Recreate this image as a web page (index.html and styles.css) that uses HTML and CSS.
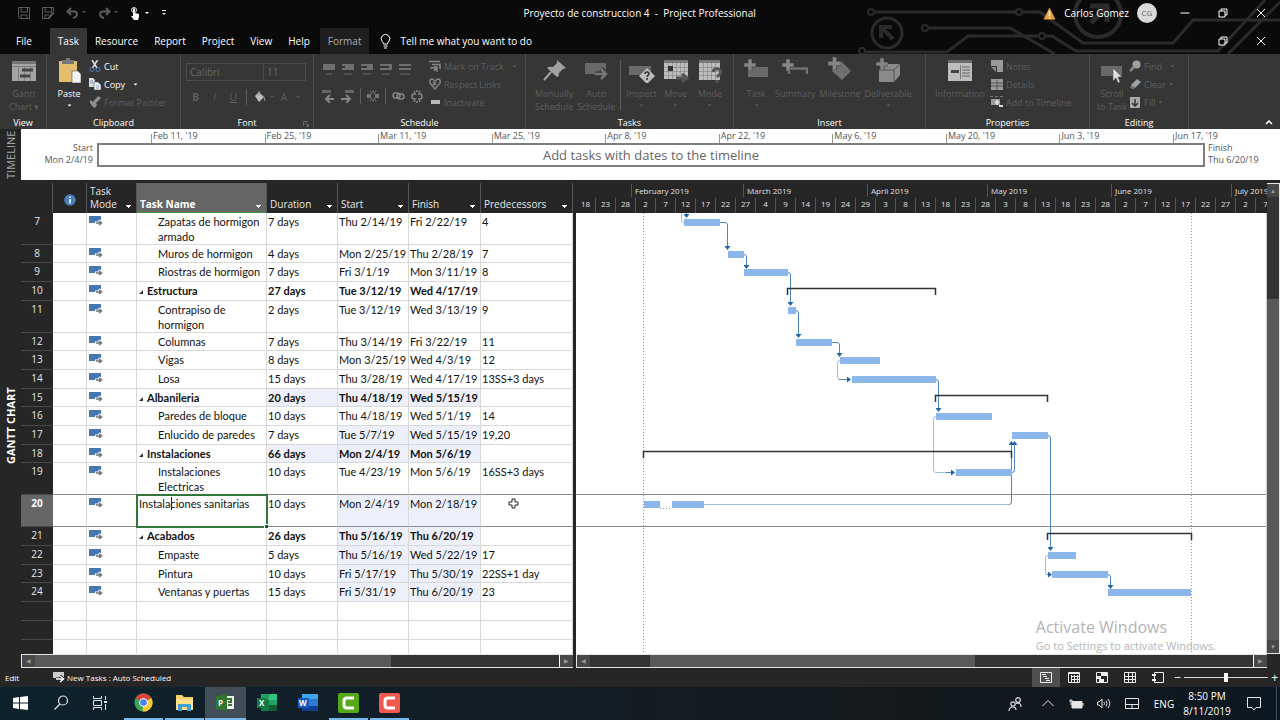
FILE: index.html
```html
<!DOCTYPE html>
<html lang="en">
<head>
    <meta charset="UTF-8">
    <meta name="viewport" content="width=device-width, initial-scale=1.0">
    <title>Proyecto de construccion 4 - Project Professional</title>
    <link rel="stylesheet" href="styles.css">
</head>
<body>
    <svg class="defs" width="0" height="0">
        <symbol id="auto" viewBox="0 0 14 10">
            <rect x="0" y="0" width="12" height="7" fill="#4576ad"/>
            <path d="M6 7 H12 M9.500 4.500 L12.500 7 L9.500 9.500" fill="none" stroke="#fff" stroke-width="3"/>
            <path d="M7 7 H12 M10 5 L12.500 7 L10 9" fill="none" stroke="#6d7178" stroke-width="1.500"/>
        </symbol>
        <symbol id="restore" viewBox="0 0 10 10">
            <path d="M3 3 V1 H9 V7 H7 M1 3 H7 V9 H1 Z" fill="none" stroke="#fff"/>
        </symbol>
        <symbol id="close" viewBox="0 0 10 10">
            <path d="M1 1 L9 9 M9 1 L1 9" stroke="#fff"/>
        </symbol>
        <symbol id="caret" viewBox="0 0 5 3">
            <path d="M0.500 0.500 H4.500 L2.500 2.500 Z" fill="currentColor"/>
        </symbol>
        <symbol id="plus" viewBox="0 0 12 12">
            <path d="M4 0 H8 V4 H12 V8 H8 V12 H4 V8 H0 V4 H4 Z" fill="#858585" stroke="#363636" stroke-width="0.500"/>
        </symbol>
    </svg>

    <header class="titlebar">
        <svg class="circuit" width="430" height="54" viewBox="0 0 430 54" fill="none" stroke="#2c2a2b" stroke-width="3">
            <path d="M25 12 H165 M173 12 H190 L233 43 H323 L343 20 H430"/>
            <path d="M79 28 H160 L205 54"/>
            <path d="M15 52 H97 L118 36 H188 M196 36 H202 L226 51 H368 L415 0 M378 54 L430 2"/>
            <circle cx="21" cy="12" r="3" stroke-width="2"/>
            <circle cx="169" cy="12" r="3" stroke-width="2"/>
            <circle cx="75" cy="28" r="3" stroke-width="2"/>
            <circle cx="192" cy="36" r="3" stroke-width="2"/>
            <circle cx="12" cy="51" r="3" stroke-width="2"/>
            <circle cx="37" cy="33" r="15"/>
            <path d="M31 38 V27 H42 M31 27 L43 39" stroke-width="4"/>
            <circle cx="248" cy="14" r="23" stroke-width="4"/>
            <path d="M240 6 H257 V22 M257 6 L241 23" stroke-width="5"/>
        </svg>
        <div class="quick">
            <button title="Save"><svg width="12" height="12" viewBox="0 0 12 12" fill="none" stroke="#5b5b5b"><path d="M0.500 0.500 H11.500 V11.500 H2 L0.500 10 Z M3 0.500 V5 H9.500 V0.500 M3 11 V8 H9 V11"/></svg></button>
            <button title="Save as"><svg width="12" height="12" viewBox="0 0 12 12" fill="none" stroke="#5b5b5b"><path d="M0.500 0.500 H11.500 V4 M6 11.500 H0.500 V0.500 M3 0.500 V5 H9.500 V0.500 M3 11 V8 H7"/><path d="M6 12 L12 5" stroke-width="2"/></svg></button>
            <button title="Undo"><svg width="20" height="12" viewBox="0 0 20 12" fill="none" stroke="#5b5b5b" stroke-width="2"><path d="M5 1 L1.500 4.500 L5 8 M2 4.500 H8 Q11 4.500 11 7.500 Q11 10 7 11"/><path d="M16 4 H20 L18 6 Z" fill="#5b5b5b" stroke="none"/></svg></button>
            <button title="Redo"><svg width="20" height="12" viewBox="0 0 20 12" fill="none" stroke="#5b5b5b" stroke-width="2"><path d="M8 1 L11.500 4.500 L8 8 M11 4.500 H5 Q2 4.500 2 7.500 Q2 10 6 11"/><path d="M16 4 H20 L18 6 Z" fill="#5b5b5b" stroke="none"/></svg></button>
            <button title="Touch mode"><svg width="20" height="13" viewBox="0 0 20 13"><path d="M3 5 V2 Q4 0 5 2 V6 L9 7 V10 L8 13 H4 L1 9 L3 9 Z" fill="#fff"/><circle cx="4" cy="3" r="2.500" fill="none" stroke="#ddd"/><path d="M15 5 H19 L17 7 Z" fill="#fff"/></svg></button>
            <button title="Customize"><svg width="5" height="6" viewBox="0 0 5 6" fill="#ddd"><path d="M0 0 H4 V1 H0 Z M0 3 H4 L2 5 Z"/></svg></button>
        </div>
        <h1 class="title">Proyecto de construccion 4 &nbsp;-&nbsp; Project Professional</h1>
        <div class="account">
            <svg width="13" height="13" viewBox="0 0 13 13"><path d="M6.500 0.500 L12.500 12.500 H0.500 Z" fill="#e8a13c"/><path d="M6.500 4 V9 M6.500 10 V11.500" stroke="#fff" stroke-width="1.500"/></svg>
            <span>Carlos Gomez</span>
            <span class="avatar">CG</span>
        </div>
        <div class="window-buttons">
            <button title="Minimize"><svg width="10" height="10" viewBox="0 0 10 10"><path d="M0.500 5 H9.500" stroke="#fff"/></svg></button>
            <button title="Restore"><svg width="10" height="10"><use href="#restore"/></svg></button>
            <button title="Close"><svg width="10" height="10"><use href="#close"/></svg></button>
        </div>
    </header>

    <nav class="tabs">
        <button class="tab file">File</button>
        <button class="tab active">Task</button>
        <button class="tab">Resource</button>
        <button class="tab">Report</button>
        <button class="tab">Project</button>
        <button class="tab">View</button>
        <button class="tab">Help</button>
        <button class="tab format">Format</button>
        <button class="tell"><svg width="11" height="15" viewBox="0 0 11 15" fill="none" stroke="#fff"><path d="M3.500 10 Q3.500 8.500 2 7.200 A4.300 4.300 0 1 1 9 7.200 Q7.500 8.500 7.500 10 Z M3.500 12 H7.500 M4 14 H7"/></svg>Tell me what you want to do</button>
        <div class="window-buttons">
            <button title="Restore"><svg width="10" height="10"><use href="#restore"/></svg></button>
            <button title="Close project"><svg width="10" height="10"><use href="#close"/></svg></button>
        </div>
    </nav>

    <section class="ribbon">
        <div class="group view">
            <div class="tools">
                <button class="big" disabled><svg width="26" height="26" viewBox="0 0 26 26"><rect x="1" y="4" width="24" height="20" fill="#a4a4a4"/><rect x="1" y="4" width="24" height="3" fill="#757575"/><path d="M1 9.500 H25 M7.500 9 V24 M13.500 9 V24 M19.500 9 V24" stroke="#7d7d7d"/><path d="M11 13 H22 M9 19 H19" stroke="#444" stroke-width="3"/></svg>Gantt<br>Chart ▾</button>
            </div>
            <h2>View</h2>
        </div>
        <div class="group clipboard">
            <div class="tools">
                <button class="big on"><svg width="26" height="26" viewBox="0 0 26 26"><rect x="3" y="4" width="18" height="21" fill="#e3bd6c"/><path d="M6 3 H10 V1 H14 V3 H18 V7 H6 Z" fill="#777"/><path d="M16 14 H22 L25 17 V26 H16 Z" fill="#f3f3f3" stroke="#363636" stroke-width="0.500"/></svg>Paste<svg width="5" height="3" class="drop"><use href="#caret"/></svg></button>
                <div class="stack">
                    <button class="small on"><svg width="12" height="12" viewBox="0 0 12 12" fill="none"><path d="M3 0 L8 8 M8.500 0 L3.500 8" stroke="#ddd" stroke-width="1.500"/><circle cx="3" cy="9.500" r="2" stroke="#4c80bd"/><circle cx="9" cy="9.500" r="2" stroke="#4c80bd"/></svg>Cut</button>
                    <button class="small on"><svg width="12" height="12" viewBox="0 0 12 12"><path d="M0 0 H4 L6 2 V9 H0 Z" fill="#ddd"/><path d="M5 4 H9 L12 7 V12 H5 Z" fill="#e9eff6" stroke="#444" stroke-width="0.500"/><path d="M1 3 H4 M1 5 H4 M7 8 H10 M7 10 H10" stroke="#5c88bb" stroke-width="0.700"/></svg>Copy<svg width="5" height="3" class="far"><use href="#caret"/></svg></button>
                    <button class="small" disabled><svg width="12" height="12" viewBox="0 0 12 12" fill="#8f8f8f"><path d="M1 4 L4 6 L9 0 L12 2 L7 7 L8 9 L6 12 L3 10 L1 7 Z"/></svg>Format Painter</button>
                </div>
            </div>
            <h2>Clipboard</h2>
        </div>
        <div class="group font">
            <div class="tools column">
                <div class="pickers">
                    <select class="family" aria-label="Font" disabled><option>Calibri</option></select>
                    <select class="size" aria-label="Font size" disabled><option>11</option></select>
                </div>
                <div class="row letters">
                    <button disabled><b>B</b></button>
                    <button disabled><i>I</i></button>
                    <button disabled><u>U</u></button>
                    <span class="rule"></span>
                    <button disabled><svg width="20" height="12" viewBox="0 0 20 12"><path d="M1 5 L5 1 L10 6 L5 11 Z" fill="#bcbcbc"/><path d="M5 0 V5 M10 6 L11 10" stroke="#999"/><path d="M16 5 H20 L18 7 Z" fill="#555"/></svg></button>
                    <button disabled>A<svg width="16" height="12" viewBox="0 0 16 12"><path d="M9 5 H13 L11 7 Z" fill="#555"/></svg></button>
                </div>
            </div>
            <h2>Font</h2>
            <svg class="launcher" width="6" height="6" viewBox="0 0 6 6" fill="none" stroke="#666"><path d="M0.500 5 V0.500 H5 M2 2 L5.500 5.500 M5.500 3 V5.500 H3"/></svg>
        </div>
        <div class="group schedule">
            <div class="tools">
                <div class="column">
                    <div class="row percents">
                        <button disabled title="0%"><svg width="12" height="12" viewBox="0 0 12 12"><rect width="12" height="6" fill="#707070"/><path d="M3 10 H9" stroke="#505050" stroke-width="2"/></svg></button>
                        <button disabled title="25%"><svg width="12" height="12" viewBox="0 0 12 12"><rect width="12" height="6" fill="#707070"/><path d="M0 3 H3" stroke="#333" stroke-width="2"/><path d="M2 10 H10" stroke="#505050" stroke-width="2"/></svg></button>
                        <button disabled title="50%"><svg width="12" height="12" viewBox="0 0 12 12"><rect width="12" height="6" fill="#707070"/><path d="M0 3 H6" stroke="#333" stroke-width="2"/><path d="M2 10 H10" stroke="#505050" stroke-width="2"/></svg></button>
                        <button disabled title="75%"><svg width="12" height="12" viewBox="0 0 12 12"><rect width="12" height="6" fill="#707070"/><path d="M0 3 H9" stroke="#333" stroke-width="2"/><path d="M2 10 H10" stroke="#505050" stroke-width="2"/></svg></button>
                        <button disabled title="100%"><svg width="12" height="12" viewBox="0 0 12 12"><rect width="12" height="6" fill="#707070"/><path d="M0 3 H12" stroke="#333" stroke-width="2"/><path d="M1 10 H11" stroke="#505050" stroke-width="2"/></svg></button>
                    </div>
                    <div class="row links">
                        <button disabled title="Outdent"><svg width="13" height="13" viewBox="0 0 13 13" fill="none" stroke="#858585"><path d="M0 1.500 H9" stroke="#666" stroke-width="3"/><path d="M12 9 H5 M8 5 L4 9 L8 13" stroke-width="2"/></svg></button>
                        <button disabled title="Indent"><svg width="13" height="13" viewBox="0 0 13 13" fill="none" stroke="#858585"><path d="M4 1.500 H13" stroke="#666" stroke-width="3"/><path d="M0 9 H8 M5 5 L9 9 L5 13" stroke-width="2"/></svg></button>
                        <span class="rule"></span>
                        <button disabled title="Split"><svg width="12" height="12" viewBox="0 0 12 12" stroke="#777"><path d="M0 6 H4 M8 6 H12" stroke-width="4"/><path d="M6 0 V3 M6 9 V12 M3 1 L5 4 M9 1 L7 4 M3 11 L5 8 M9 11 L7 8"/></svg></button>
                        <span class="rule"></span>
                        <button disabled title="Link"><svg width="13" height="8" viewBox="0 0 13 8" fill="none" stroke="#858585" stroke-width="1.500"><rect x="1" y="1" width="7" height="5" rx="2.500"/><rect x="5" y="2" width="7" height="5" rx="2.500"/></svg></button>
                        <button disabled title="Unlink"><svg width="12" height="13" viewBox="0 0 12 13" fill="none" stroke="#858585" stroke-width="1.500"><path d="M5 4 H3 Q1 4 1 6.500 Q1 9 3 9 H5 M7 4 H9 Q11 4 11 6.500 Q11 9 9 9 H7 M6 0 V2 M3 1 L4 3 M9 1 L8 3 M6 11 V13 M3 12 L4 10 M9 12 L8 10"/></svg></button>
                    </div>
                </div>
                <div class="stack">
                    <button class="small" disabled><svg width="12" height="12" viewBox="0 0 12 12" fill="none" stroke="#858585" stroke-width="1.500"><path d="M0 1.500 H11 M3 4.500 H11 V9 M1 8 H7 M5 6 L7 8 L5 11 M8 12 V6"/></svg>Mark on Track<svg width="5" height="3" class="far"><use href="#caret"/></svg></button>
                    <button class="small" disabled><svg width="12" height="12" viewBox="0 0 12 12" fill="none" stroke="#858585" stroke-width="1.500"><path d="M6 11 L1 5 Q0 1 3.500 1 L6 3 L8.500 1 Q12 1 11 5 Z M4 4 L7 7 M7 4 L4 7"/></svg>Respect Links</button>
                    <button class="small" disabled><svg width="12" height="12" viewBox="0 0 12 12"><rect x="2" y="4" width="9" height="4" fill="#bababa"/></svg>Inactivate</button>
                </div>
            </div>
            <h2>Schedule</h2>
        </div>
        <div class="group tasks">
            <div class="tools">
                <button class="big" disabled><svg width="26" height="26" viewBox="0 0 26 26"><path d="M16 3 L25 11 L22 12 L18 16 Q18 20 16 20 L6 11 Q8 9 12 10 L16 6 Z" fill="#a0a0a0"/><path d="M10 15 L3 23" stroke="#a0a0a0" stroke-width="2"/></svg>Manually<br>Schedule</button>
                <button class="big" disabled><svg width="26" height="26" viewBox="0 0 26 26"><rect x="2" y="6" width="21" height="11" fill="#696969"/><path d="M12 17 H23 M18 12 L23 17 L18 22" fill="none" stroke="#363636" stroke-width="5"/><path d="M12 17 H23 M18 12 L23 17 L18 22" fill="none" stroke="#777" stroke-width="2.500"/></svg>Auto<br>Schedule</button>
                <span class="rule tall"></span>
                <button class="big" disabled><svg width="28" height="26" viewBox="0 0 28 26"><rect x="1" y="9" width="22" height="9" fill="#696969"/><path d="M19 11 L27 19 L19 27 L11 19 Z" fill="#bbb"/><path d="M17 17 Q17 15 19 15 Q21 15 21 17 Q20 18 19 20 M19 21 V23" fill="none" stroke="#333" stroke-width="1.500"/></svg>Inspect<svg width="5" height="3" class="drop"><use href="#caret"/></svg></button>
                <button class="big" disabled><svg width="28" height="26" viewBox="0 0 28 26"><rect x="2" y="3" width="24" height="19" fill="#bdbdbd"/><rect x="2" y="3" width="24" height="3" fill="#777"/><path d="M2 10.500 H26 M2 14.500 H26 M2 18.500 H26 M6.500 6 V22 M10.500 6 V22 M14.500 6 V22 M18.500 6 V22 M22.500 6 V22" stroke="#888" stroke-width="0.700"/><rect x="6" y="9" width="5" height="5" fill="#333"/><path d="M14 21 H24 M20 17 L25 21 L20 25" fill="none" stroke="#555" stroke-width="3"/></svg>Move<svg width="5" height="3" class="drop"><use href="#caret"/></svg></button>
                <button class="big" disabled><svg width="28" height="26" viewBox="0 0 28 26"><rect x="3" y="3" width="21" height="20" fill="#bdbdbd"/><rect x="3" y="3" width="21" height="3" fill="#777"/><path d="M3 10.500 H24 M3 14.500 H24 M3 18.500 H24 M7.500 6 V23 M11.500 6 V23 M15.500 6 V23 M19.500 6 V23" stroke="#888" stroke-width="0.700"/><path d="M17 15 Q18 11 22 12 Q26 13 24 17 L21 20 M21 23 V26" fill="none" stroke="#555" stroke-width="3"/></svg>Mode<svg width="5" height="3" class="drop"><use href="#caret"/></svg></button>
            </div>
            <h2>Tasks</h2>
        </div>
        <div class="group insert">
            <div class="tools">
                <button class="big" disabled><svg width="26" height="26" viewBox="0 0 26 26"><rect x="5" y="10" width="20" height="10" fill="#696969"/><use href="#plus" x="1" y="2" width="12" height="12"/></svg>Task<svg width="5" height="3" class="drop"><use href="#caret"/></svg></button>
                <button class="big" disabled><svg width="26" height="26" viewBox="0 0 26 26"><path d="M7 17 V11.500 H25 V17" fill="none" stroke="#707070" stroke-width="2.500"/><use href="#plus" x="0" y="2" width="12" height="12"/></svg>Summary</button>
                <button class="big" disabled><svg width="26" height="26" viewBox="0 0 26 26"><path d="M14 4 L24 14 L15 23 L5 14 Z" fill="#707070"/><use href="#plus" x="1" y="0" width="13" height="13"/></svg>Milestone</button>
                <button class="big" disabled><svg width="26" height="26" viewBox="0 0 26 26"><path d="M4 13 L9 7 H25 V18 L19 25 H4 Z" fill="#8a8a8a"/><path d="M4 13 H19 V25 M19 13 L25 7" fill="none" stroke="#555"/><use href="#plus" x="1" y="1" width="12" height="12"/></svg>Deliverable<svg width="5" height="3" class="drop"><use href="#caret"/></svg></button>
            </div>
            <h2>Insert</h2>
        </div>
        <div class="group properties">
            <div class="tools">
                <button class="big" disabled><svg width="26" height="26" viewBox="0 0 26 26"><rect x="1" y="3" width="24" height="21" fill="#bdbdbd"/><rect x="1" y="3" width="24" height="3" fill="#6b6b6b"/><path d="M4 14.500 H12" stroke="#444" stroke-width="3"/><path d="M13.500 8 V22" stroke="#777"/><path d="M15 10 H23 M15 13 H23 M15 16 H23 M15 19 H23" stroke="#666"/></svg>Information</button>
                <div class="stack">
                    <button class="small" disabled><svg width="13" height="12" viewBox="0 0 13 12"><path d="M1 0 H13 V12 H7 V6 H1 Z" fill="#999"/><path d="M1 7 H6 V12 Z" fill="#888"/></svg>Notes</button>
                    <button class="small" disabled><svg width="13" height="12" viewBox="0 0 13 12"><rect x="1" y="1" width="12" height="11" fill="#999"/><path d="M1 5 H13 M1 8 H13 M7 2 V12" stroke="#555"/></svg>Details</button>
                    <button class="small" disabled><svg width="13" height="13" viewBox="0 0 13 13"><path d="M0 0.500 H13" stroke="#777" stroke-dasharray="3 2"/><rect x="1" y="3" width="9" height="6" fill="#999"/><path d="M5 6.500 H9 M7 4 V9 M9 10 H13" stroke="#ddd" stroke-width="2"/></svg>Add to Timeline</button>
                </div>
            </div>
            <h2>Properties</h2>
        </div>
        <div class="group editing">
            <div class="tools">
                <button class="big" disabled><svg width="26" height="26" viewBox="0 0 26 26"><rect x="2" y="9" width="21" height="10" fill="#696969"/><path d="M14 11 V24 L17 21 L19 26 L21 25 L19 20 H23 Z" fill="#ddd" stroke="#444" stroke-width="0.500"/></svg>Scroll<br>to Task</button>
                <div class="stack">
                    <button class="small" disabled><svg width="12" height="12" viewBox="0 0 12 12"><circle cx="7.500" cy="4.500" r="4" fill="#a0a0a0"/><path d="M5 7 L1 11" stroke="#888" stroke-width="2.500"/></svg>Find<svg width="5" height="3" class="far"><use href="#caret"/></svg></button>
                    <button class="small" disabled><svg width="12" height="12" viewBox="0 0 12 12"><path d="M8 1 L12 4 L6 10 L2 7 Z" fill="#a0a0a0"/><path d="M2 7 L6 10 L4 11 L1 10 Z" fill="#777"/></svg>Clear<svg width="5" height="3"><use href="#caret"/></svg></button>
                    <button class="small" disabled><svg width="12" height="12" viewBox="0 0 12 12"><rect x="1" y="1" width="10" height="11" fill="#aaa"/><path d="M6 3 V9 M3 7 L6 10 L9 7" fill="none" stroke="#333" stroke-width="1.500"/></svg>Fill<svg width="5" height="3"><use href="#caret"/></svg></button>
                </div>
            </div>
            <h2>Editing</h2>
        </div>
        <button class="collapse" title="Collapse the ribbon"><svg width="8" height="5" viewBox="0 0 8 5" fill="none" stroke="#fff" stroke-width="1.500"><path d="M1 4 L4 1 L7 4"/></svg></button>
    </section>

    <section class="timeline">
        <div class="strip dim">TIMELINE</div>
        <div class="timeline-body">
            <p class="edge start">Start<br>Mon 2/4/19</p>
            <div class="span">
                <div class="marks">
                    <span>Feb 11, '19</span><span>Feb 25, '19</span><span>Mar 11, '19</span><span>Mar 25, '19</span><span>Apr 8, '19</span><span>Apr 22, '19</span><span>May 6, '19</span><span>May 20, '19</span><span>Jun 3, '19</span><span>Jun 17, '19</span>
                </div>
                <div class="drop-area">Add tasks with dates to the timeline</div>
            </div>
            <p class="edge">Finish<br>Thu 6/20/19</p>
        </div>
    </section>

    <main class="workspace">
        <div class="strip">GANTT CHART</div>
        <div class="sheet">
            <div class="table-wrap">
                <table class="grid">
                    <colgroup><col class="c-num"><col class="c-info"><col class="c-mode"><col class="c-name"><col class="c-dur"><col class="c-dur"><col class="c-fin"><col class="c-pred"></colgroup>
                    <thead>
                        <tr>
                            <th></th>
                            <th class="info"><svg width="12" height="12" viewBox="0 0 12 12"><circle cx="6" cy="6" r="5.800" fill="#4a7ebb"/><path d="M6 2.500 V4 M6 5 V9.500" stroke="#fff" stroke-width="1.500"/></svg></th>
                            <th>Task<br>Mode</th>
                            <th class="current">Task Name</th>
                            <th>Duration</th>
                            <th>Start</th>
                            <th>Finish</th>
                            <th>Predecessors</th>
                        </tr>
                    </thead>
                    <tbody>
                        <tr class="double"><th>7</th><td></td><td class="mode"><svg><use href="#auto"/></svg></td><td class="name">Zapatas de hormigon armado</td><td>7 days</td><td>Thu 2/14/19</td><td>Fri 2/22/19</td><td>4</td></tr>
                        <tr class="short"><th>8</th><td></td><td class="mode"><svg><use href="#auto"/></svg></td><td class="name">Muros de hormigon</td><td>4 days</td><td>Mon 2/25/19</td><td>Thu 2/28/19</td><td>7</td></tr>
                        <tr><th>9</th><td></td><td class="mode"><svg><use href="#auto"/></svg></td><td class="name">Riostras de hormigon</td><td>7 days</td><td>Fri 3/1/19</td><td>Mon 3/11/19</td><td>8</td></tr>
                        <tr class="summary"><th>10</th><td></td><td class="mode"><svg><use href="#auto"/></svg></td><td class="name">Estructura</td><td>27 days</td><td>Tue 3/12/19</td><td>Wed 4/17/19</td><td></td></tr>
                        <tr class="double"><th>11</th><td></td><td class="mode"><svg><use href="#auto"/></svg></td><td class="name">Contrapiso de hormigon</td><td>2 days</td><td>Tue 3/12/19</td><td>Wed 3/13/19</td><td>9</td></tr>
                        <tr class="short"><th>12</th><td></td><td class="mode"><svg><use href="#auto"/></svg></td><td class="name">Columnas</td><td>7 days</td><td>Thu 3/14/19</td><td>Fri 3/22/19</td><td>11</td></tr>
                        <tr><th>13</th><td></td><td class="mode"><svg><use href="#auto"/></svg></td><td class="name">Vigas</td><td>8 days</td><td>Mon 3/25/19</td><td>Wed 4/3/19</td><td>12</td></tr>
                        <tr><th>14</th><td></td><td class="mode"><svg><use href="#auto"/></svg></td><td class="name">Losa</td><td>15 days</td><td>Thu 3/28/19</td><td>Wed 4/17/19</td><td>13SS+3 days</td></tr>
                        <tr class="summary short"><th>15</th><td></td><td class="mode"><svg><use href="#auto"/></svg></td><td class="name">Albanileria</td><td class="changed">20 days</td><td class="changed">Thu 4/18/19</td><td class="changed">Wed 5/15/19</td><td></td></tr>
                        <tr><th>16</th><td></td><td class="mode"><svg><use href="#auto"/></svg></td><td class="name">Paredes de bloque</td><td>10 days</td><td>Thu 4/18/19</td><td>Wed 5/1/19</td><td>14</td></tr>
                        <tr><th>17</th><td></td><td class="mode"><svg><use href="#auto"/></svg></td><td class="name">Enlucido de paredes</td><td>7 days</td><td class="changed">Tue 5/7/19</td><td class="changed">Wed 5/15/19</td><td>19,20</td></tr>
                        <tr class="summary short"><th>18</th><td></td><td class="mode"><svg><use href="#auto"/></svg></td><td class="name">Instalaciones</td><td class="changed">66 days</td><td class="changed">Mon 2/4/19</td><td class="changed">Mon 5/6/19</td><td></td></tr>
                        <tr class="double before"><th>19</th><td></td><td class="mode"><svg><use href="#auto"/></svg></td><td class="name">Instalaciones Electricas</td><td>10 days</td><td>Tue 4/23/19</td><td>Mon 5/6/19</td><td>16SS+3 days</td></tr>
                        <tr class="double selected"><th>20</th><td></td><td class="mode"><svg><use href="#auto"/></svg></td><td class="editing-cell"><input type="text" aria-label="Task name" value="Instalaciones sanitarias"><span class="text-cursor"></span><span class="handle"></span></td><td>10 days</td><td class="changed">Mon 2/4/19</td><td class="changed">Mon 2/18/19</td><td></td></tr>
                        <tr class="summary"><th>21</th><td></td><td class="mode"><svg><use href="#auto"/></svg></td><td class="name">Acabados</td><td>26 days</td><td class="changed">Thu 5/16/19</td><td class="changed">Thu 6/20/19</td><td></td></tr>
                        <tr><th>22</th><td></td><td class="mode"><svg><use href="#auto"/></svg></td><td class="name">Empaste</td><td>5 days</td><td class="changed">Thu 5/16/19</td><td class="changed">Wed 5/22/19</td><td>17</td></tr>
                        <tr class="short"><th>23</th><td></td><td class="mode"><svg><use href="#auto"/></svg></td><td class="name">Pintura</td><td>10 days</td><td class="changed">Fri 5/17/19</td><td class="changed">Thu 5/30/19</td><td>22SS+1 day</td></tr>
                        <tr><th>24</th><td></td><td class="mode"><svg><use href="#auto"/></svg></td><td class="name">Ventanas y puertas</td><td>15 days</td><td class="changed">Fri 5/31/19</td><td class="changed">Thu 6/20/19</td><td>23</td></tr>
                        <tr><th></th><td></td><td></td><td></td><td></td><td></td><td></td><td></td></tr>
                        <tr><th></th><td></td><td></td><td></td><td></td><td></td><td></td><td></td></tr>
                        <tr><th></th><td></td><td></td><td></td><td></td><td></td><td></td><td></td></tr>
                    </tbody>
                </table>
                <svg class="pointer" width="11" height="11" viewBox="0 0 11 11"><path d="M4 1 H7 V4 H10 V7 H7 V10 H4 V7 H1 V4 H4 Z" fill="#fff" stroke="#222"/></svg>
            </div>
            <div class="hscroll">
                <button title="Scroll left">◀</button>
                <div class="track sheet-track"><div class="thumb"></div></div>
                <button class="end" title="Scroll right">▶</button>
            </div>
        </div>

        <div class="gantt">
            <div class="scale months">
                <span class="lead"></span><span class="m112">February 2019</span><span class="m124">March 2019</span><span class="m120">April 2019</span><span class="m124">May 2019</span><span class="m120">June 2019</span><span class="m120">July 2019</span>
            </div>
            <div class="scale days">
                <span>18</span><span>23</span><span>28</span><span>2</span><span>7</span><span>12</span><span>17</span><span>22</span><span>27</span><span>4</span><span>9</span><span>14</span><span>19</span><span>24</span><span>29</span><span>3</span><span>8</span><span>13</span><span>18</span><span>23</span><span>28</span><span>3</span><span>8</span><span>13</span><span>18</span><span>23</span><span>28</span><span>2</span><span>7</span><span>12</span><span>17</span><span>22</span><span>27</span><span>2</span><span>7</span>
            </div>
            <div class="chart">
                <svg class="bars">
                    <defs>
                        <marker id="arrow" markerWidth="6" markerHeight="6" refX="3" refY="3" orient="auto" markerUnits="userSpaceOnUse"><path d="M0 0 L4 3 L0 6 Z" fill="#2264ab"/></marker>
                    </defs>
                    <!-- project start and finish -->
                    <path class="dots" d="M67.500 0 V441 M615.500 0 V441"/>
                    <!-- selected row -->
                    <path class="row-line" d="M0 281.500 H2000 M0 313.500 H2000"/>
                    <!-- links -->
                    <g class="link pale">
                        <path d="M105.500 0 V7 Q105.500 9.500 108 9.500"/>
                        <path d="M264 147.500 Q261.500 147.500 261.500 150 V164 Q261.500 166.500 264 166.500"/>
                        <path d="M360 203.500 Q357.500 203.500 357.500 206 V257 Q357.500 259.500 360 259.500 H374"/>
                        <path d="M128 291.500 H433"/>
                        <path d="M472 342.500 Q469.500 342.500 469.500 345 V359 Q469.500 361.500 471 361.500"/>
                    </g>
                    <g class="link">
                        <path d="M110.500 0 V4" marker-end="url(#arrow)"/>
                        <path d="M144 9.500 H149 Q151.500 9.500 151.500 12 V36" marker-end="url(#arrow)"/>
                        <path d="M168 41.500 Q170.500 41.500 170.500 44 V55" marker-end="url(#arrow)"/>
                        <path d="M212 59.500 Q214.500 59.500 214.500 62 V92" marker-end="url(#arrow)"/>
                        <path d="M220 97.500 Q222.500 97.500 222.500 100 V124" marker-end="url(#arrow)"/>
                        <path d="M256 129.500 H261 Q263.500 129.500 263.500 132 V143" marker-end="url(#arrow)"/>
                        <path d="M263 166.500 H274" marker-end="url(#arrow)"/>
                        <path d="M360 166.500 Q362.500 166.500 362.500 169 V198" marker-end="url(#arrow)"/>
                        <path d="M370 259.500 H378" marker-end="url(#arrow)"/>
                        <path d="M436 259.500 Q438.500 259.500 438.500 257 V229" marker-end="url(#arrow)"/>
                        <path d="M433 291.500 Q435.500 291.500 435.500 289 V229" marker-end="url(#arrow)"/>
                        <path d="M472 222.500 Q474.500 222.500 474.500 225 V337" marker-end="url(#arrow)"/>
                        <path d="M471 361.500 H475" marker-end="url(#arrow)"/>
                        <path d="M532 361.500 Q534.500 361.500 534.500 364 V375" marker-end="url(#arrow)"/>
                    </g>
                    <!-- tasks -->
                    <g class="task">
                        <rect x="108" y="6" width="36" height="7"/>
                        <rect x="152" y="38" width="16" height="7"/>
                        <rect x="168" y="56" width="44" height="7"/>
                        <rect x="212" y="94" width="8" height="7"/>
                        <rect x="220" y="126" width="36" height="7"/>
                        <rect x="264" y="144" width="40" height="7"/>
                        <rect x="276" y="163" width="84" height="7"/>
                        <rect x="360" y="200" width="56" height="7"/>
                        <rect x="436" y="219" width="36" height="7"/>
                        <rect x="380" y="256" width="56" height="7"/>
                        <rect x="68" y="288" width="16" height="7"/>
                        <rect x="96" y="288" width="32" height="7"/>
                        <rect x="472" y="339" width="28" height="7"/>
                        <rect x="476" y="358" width="56" height="7"/>
                        <rect x="532" y="376" width="83" height="7"/>
                    </g>
                    <path class="dots" d="M84 295.500 H96"/>
                    <!-- summary brackets -->
                    <g class="bracket">
                        <path d="M211.500 82 V75.500 H359.500 V82"/>
                        <path d="M359.500 189 V182.500 H471.500 V189"/>
                        <path d="M67.500 245 V238.500 H435.500 V245"/>
                        <path d="M471.500 327 V320.500 H615.500 V327"/>
                    </g>
                </svg>
                <div class="activate">
                    <strong>Activate Windows</strong>
                    <span>Go to Settings to activate Windows.</span>
                </div>
            </div>
            <div class="hscroll">
                <button title="Scroll left">◀</button>
                <div class="track gantt-track"><div class="thumb"></div></div>
                <button class="end" title="Scroll right">▶</button>
            </div>
        </div>

        <div class="vscroll">
            <button title="Scroll up">▲</button>
            <div class="track"><div class="thumb"></div></div>
            <button title="Scroll down">▼</button>
        </div>
    </main>

    <footer class="status">
        <span class="state">Edit</span>
        <button class="new-tasks"><svg width="12" height="11" viewBox="0 0 12 11"><rect width="11" height="6" fill="#ccc"/><path d="M3 7 H10 M7 4 L10.500 7 L7 10" fill="none" stroke="#262626" stroke-width="3"/><path d="M3 7 H10 M7 4 L10.500 7 L7 10" fill="none" stroke="#fff" stroke-width="1.500"/></svg>New Tasks : Auto Scheduled</button>
        <div class="views">
            <button class="active" title="Gantt Chart"><svg width="12" height="11" viewBox="0 0 12 11" fill="none" stroke="#eee"><path d="M0.500 0.500 H11.500 V10.500 H0.500 Z M2 2.500 H6 M3 4.500 H7 M5 6.500 H9 M6 8.500 H10"/></svg></button>
            <button title="Task Usage"><svg width="12" height="11" viewBox="0 0 12 11" fill="none" stroke="#eee"><path d="M0.500 0.500 H11.500 V10.500 H0.500 Z M0 1.500 H12 M3.500 3 V10 M6.500 3 V10 M9.500 3 V10 M3 4.500 H12 M3 7.500 H12"/></svg></button>
            <button title="Team Planner"><svg width="12" height="11" viewBox="0 0 12 11" fill="none" stroke="#eee"><path d="M0.500 0.500 H11.500 V10.500 H0.500 Z"/><path d="M5 2.500 H11 M1 5.500 H5 M3 8.500 H8" stroke-width="3"/></svg></button>
            <button title="Resource Sheet"><svg width="12" height="11" viewBox="0 0 12 11" fill="none" stroke="#eee"><path d="M0.500 0.500 H11.500 V10.500 H0.500 Z M4.500 0 V11 M8.500 0 V11 M0 4.500 H12 M0 7.500 H12"/></svg></button>
            <button title="Report"><svg width="12" height="11" viewBox="0 0 12 11" fill="none" stroke="#eee"><path d="M2.500 0.500 H11.500 V10.500 H2.500 Z"/><path d="M0 3 H4 M0 8 H4" stroke-width="2"/></svg></button>
        </div>
        <label class="zoom"><span>−</span><input type="range" aria-label="Zoom" min="0" max="100" value="50"><span>+</span></label>
    </footer>

    <footer class="taskbar">
        <div class="apps">
            <button title="Start"><svg width="15" height="14" viewBox="0 0 15 14" fill="#fff"><path d="M0 2 L6 1 V6.500 H0 Z M7 1 L15 0 V6.500 H7 Z M0 7.500 H6 V13 L0 12 Z M7 7.500 H15 V14 L7 13 Z"/></svg></button>
            <button title="Search"><svg width="15" height="15" viewBox="0 0 15 15" fill="none" stroke="#e6e6e6" stroke-width="1.200"><circle cx="9" cy="5.500" r="4.500"/><path d="M6 9 L0.500 14.500"/></svg></button>
            <button title="Task View"><svg width="20" height="14" viewBox="0 0 20 14" fill="none" stroke="#e6e6e6"><path d="M0.500 0 V2.500 H8.500 V0 M0.500 4.500 H8.500 V9.500 H0.500 Z M0.500 14 V11.500 H8.500 V14 M12.500 0 V4 M12.500 8 V14"/><path d="M11 6 H14" stroke-width="2"/></svg></button>
            <button class="open" title="Chrome"><svg width="19" height="19" viewBox="0 0 20 20"><circle cx="10" cy="10" r="9.500" fill="#3ba755"/><path d="M10 10 L1.800 5.200 A9.500 9.500 0 0 1 18.200 5.200 Z" fill="#dc4437"/><path d="M10 10 L18.200 5.200 A9.500 9.500 0 0 1 9 19.500 Z" fill="#fbc934"/><circle cx="10" cy="10" r="4.500" fill="#fff"/><circle cx="10" cy="10" r="3.500" fill="#4285f4"/></svg></button>
            <button class="open" title="File Explorer"><svg width="19" height="17" viewBox="0 0 19 17"><path d="M1 1 H7 L9 3 H18 V15 H1 Z" fill="#f3cf68"/><path d="M1 5 H18 V16 H1 Z" fill="#fbe08c"/><path d="M3 17 V10 H16 V17 H12 V13 H7 V17 Z" fill="#3f9fd5"/></svg></button>
            <button class="open active" title="Project"><svg width="19" height="17" viewBox="0 0 19 17"><rect x="8" y="2" width="10" height="13" fill="#eee"/><path d="M11 5 H15 V8 H12 M12 11 H16" fill="none" stroke="#31752f" stroke-width="2"/><path d="M0 2 L11 0 V17 L0 15 Z" fill="#31752f"/><text x="2" y="12" class="app-letter">P</text></svg></button>
            <button title="Excel"><svg width="20" height="17" viewBox="0 0 20 17"><rect x="4" y="0" width="16" height="17" fill="#21a366"/><rect x="12" y="0" width="8" height="6" fill="#33c481"/><rect x="4" y="6" width="8" height="11" fill="#107c41"/><rect x="12" y="11" width="8" height="6" fill="#185c37"/><rect y="4" width="10" height="10" fill="#107c41"/><text x="2" y="12" class="app-letter">X</text></svg></button>
            <button title="Word"><svg width="20" height="17" viewBox="0 0 20 17"><rect x="4" y="0" width="16" height="17" fill="#2b7cd3"/><rect x="4" y="0" width="16" height="5" fill="#41a5ee"/><rect x="4" y="12" width="16" height="5" fill="#103f91"/><rect y="4" width="11" height="10" fill="#185abd"/><text x="1" y="12" class="app-letter">W</text></svg></button>
            <button class="open" title="Camtasia"><svg width="21" height="20" viewBox="0 0 21 20"><rect width="21" height="20" rx="2" fill="#55a818"/><path d="M16 5 H9 Q6 5 6 8 V12 Q6 15 9 15 H16" fill="none" stroke="#fff" stroke-width="3"/></svg></button>
            <button class="open" title="Camtasia Recorder"><svg width="21" height="20" viewBox="0 0 21 20"><rect width="21" height="20" rx="2" fill="#f2584d"/><path d="M16 5 H9 Q6 5 6 8 V12 Q6 15 9 15 H16" fill="none" stroke="#fff" stroke-width="3"/></svg></button>
        </div>
        <div class="tray">
            <button title="People"><svg width="14" height="14" viewBox="0 0 14 14" fill="none" stroke="#ddd" stroke-width="1.200"><circle cx="10" cy="3" r="2.300"/><circle cx="5" cy="7" r="2.200"/><path d="M1 14 Q1 10 5 10 Q8 10 8 13 M8 6.500 Q13 5 13 10"/></svg></button>
            <button title="Show hidden icons"><svg width="12" height="7" viewBox="0 0 12 7" fill="none" stroke="#e6e6e6"><path d="M0.500 6 L6 0.500 L11.500 6"/></svg></button>
            <button title="Battery"><svg width="15" height="10" viewBox="0 0 15 10" fill="none" stroke="#e6e6e6"><path d="M3 2.500 H13 V9 H3 Z" fill="#e6e6e6"/><path d="M14 4 V7 M2 0 V6 M0 2 H4"/></svg></button>
            <button title="Volume"><svg width="14" height="11" viewBox="0 0 14 11" fill="none" stroke="#e6e6e6"><path d="M0.500 4 H2 L5 1 V10 L2 7 H0.500 Z M7 4 Q8 5.500 7 7 M9 2.500 Q11 5.500 9 8.500 M11 1 Q14.500 5.500 11 10"/></svg></button>
            <button title="Touchpad"><svg width="14" height="11" viewBox="0 0 14 11" fill="none" stroke="#e6e6e6"><path d="M0.500 0.500 H13.500 V10.500 H0.500 Z M0 6.500 H14 M7 7 V10"/></svg></button>
            <button class="lang">ENG</button>
            <button class="clock">8:50 PM<br>8/11/2019</button>
            <button class="notices" title="Notifications"><svg width="14" height="14" viewBox="0 0 14 14" fill="none" stroke="#e6e6e6"><path d="M0.500 0.500 H13.500 V10.500 H9 L7 13 L5 10.500 H0.500 Z"/></svg></button>
        </div>
    </footer>
</body>
</html>
```
FILE: styles.css
```css
* {
    box-sizing: border-box;
}
body {
    margin: 0;
    height: 100vh;
    display: flex;
    flex-direction: column;
    overflow: hidden;
    background: #262626;
    color: #fff;
    font-family: "Open Sans", "Noto Sans", sans-serif;
    font-size: 9px;
}
button, input, select {
    font: inherit;
    color: inherit;
    background: none;
    border: 0;
    padding: 0;
    margin: 0;
}
h1, h2, p {
    margin: 0;
    font-size: inherit;
    font-weight: normal;
}
svg {
    flex: none;
}
.defs {
    position: absolute;
}

/* title bar */
.titlebar {
    height: 28px;
    background: #0a0a0a;
    display: flex;
    align-items: center;
    position: relative;
    padding: 0 0 2px 18px;
    font-size: 10px;
}
.circuit {
    position: absolute;
    right: 0;
    top: 0;
}
.quick {
    display: flex;
    align-items: center;
    gap: 12px;
    width: 200px;
}
.quick button {
    display: flex;
}
.title {
    flex: 1;
    text-align: center;
    padding-left: 18px;
    white-space: nowrap;
}
.account {
    position: relative;
    display: flex;
    align-items: center;
    gap: 8px;
    margin-right: 9px;
}
.avatar {
    width: 20px;
    height: 20px;
    border-radius: 50%;
    background: #d9d9d9;
    color: #666;
    font-size: 8px;
    line-height: 20px;
    text-align: center;
}
.window-buttons {
    position: relative;
    display: flex;
}
.window-buttons button {
    width: 38px;
    height: 20px;
    display: flex;
    align-items: center;
    justify-content: center;
}

/* ribbon tabs */
.tabs {
    height: 26px;
    background: #0a0a0a;
    display: flex;
    align-items: stretch;
}
.tabs .window-buttons {
    margin-left: auto;
    align-items: center;
}
.tab, .tell {
    padding: 0 8px;
    font-size: 10px;
    position: relative;
}
.file {
    padding: 0 18px 0 16px;
}
.active.tab {
    background: #363636;
}
.format {
    background: #1f1f1f;
    color: #aaa;
    margin-left: 2px;
}
.tell {
    display: flex;
    align-items: center;
    gap: 9px;
    padding-left: 11px;
}

/* ribbon */
.ribbon {
    height: 75px;
    background: #363636;
    display: flex;
    position: relative;
}
.group {
    display: flex;
    flex-direction: column;
    border-right: 1px solid #4c4c4c;
    position: relative;
}
.group h2 {
    text-align: center;
    line-height: 13px;
}
.tools {
    height: 62px;
    display: flex;
    padding: 3px 5px 0;
}
.column {
    display: flex;
    flex-direction: column;
}
.big {
    display: block;
    min-width: 34px;
    padding: 0 2px;
    line-height: 13px;
    text-align: center;
    white-space: nowrap;
    align-self: flex-start;
}
.big svg {
    display: block;
    margin: 0 auto 4px;
}
.big .drop {
    margin: 4px auto 0;
}
.ribbon button:disabled {
    color: #5e5e5e;
}
.ribbon .on {
    color: #fff;
}
.small {
    display: flex;
    align-items: center;
    gap: 3px;
    height: 18px;
    white-space: nowrap;
}
.small .far {
    margin-left: 5px;
}
.row {
    display: flex;
    align-items: center;
    height: 26px;
}
.row button {
    display: flex;
    align-items: center;
    justify-content: center;
}
.rule {
    width: 1px;
    height: 16px;
    background: #5c5c5c;
}
.rule.tall {
    height: 50px;
    margin: 3px 3px;
}
.view {
    width: 47px;
}
.clipboard {
    width: 134px;
}
.clipboard .big {
    margin-right: 3px;
}
.font {
    width: 133px;
}
.schedule {
    width: 212px;
}
.tasks {
    width: 208px;
}
.tasks .tools, .properties .tools, .view .tools {
    padding-left: 7px;
}
.insert {
    width: 192px;
}
.properties {
    width: 164px;
}
.properties .stack {
    margin-left: 3px;
}
.editing {
    width: 99px;
}
.pickers {
    display: flex;
    margin: 6px 0 3px;
}
.pickers select {
    appearance: none;
    height: 18px;
    border: 1px solid #4c4c4c;
    padding: 0 3px;
    font-size: 10px;
    color: #666;
    opacity: 1;
}
.family {
    width: 78px;
}
.pickers .size {
    width: 42px;
    border-left: 0;
}
.letters button {
    width: 19px;
    font-size: 10px;
}
.letters .rule {
    margin: 0 3px;
}
.letters button:nth-last-child(-n+2) {
    width: 28px;
}
.launcher {
    position: absolute;
    right: 4px;
    bottom: 2px;
}
.percents {
    padding-left: 4px;
    gap: 7px;
}
.links {
    padding-left: 3px;
    gap: 6px;
}
.schedule .stack {
    margin-left: 6px;
}
.collapse {
    position: absolute;
    right: 7px;
    bottom: 4px;
    line-height: 0;
}

/* timeline */
.timeline {
    height: 51px;
    display: flex;
}
.strip {
    width: 21px;
    flex: none;
    background: #262626;
    writing-mode: vertical-rl;
    transform: rotate(180deg);
    text-align: center;
    font-size: 11px;
    line-height: 21px;
    font-weight: bold;
}
.strip.dim {
    color: #a5a5a5;
    font-weight: normal;
}
.timeline-body {
    flex: 1;
    display: flex;
    background: #fff;
    color: #555;
    line-height: 12px;
    padding-right: 5px;
}
.edge {
    width: 70px;
    padding: 13px 0 0 3px;
    white-space: nowrap;
}
.edge.start {
    width: 76px;
    padding: 13px 4px 0 0;
    text-align: right;
}
.span {
    flex: 1;
}
.marks {
    height: 14px;
    margin-left: 54px;
    display: grid;
    grid-template-columns: repeat(9, 1fr) 32px;
    align-items: end;
}
.marks span {
    height: 9px;
    border-left: 1px solid #999;
    padding-left: 1px;
    line-height: 4px;
    white-space: nowrap;
}
.drop-area {
    height: 24px;
    border: 2px solid #7d7d7d;
    color: #666;
    text-align: center;
    font-size: 13px;
    line-height: 20px;
}

/* sheet and chart */
.workspace {
    flex: 1;
    min-height: 0;
    display: flex;
    margin-top: 3px;
}
.sheet {
    flex: none;
    display: flex;
    flex-direction: column;
}
.table-wrap {
    flex: 1;
    min-height: 0;
    overflow: hidden;
    position: relative;
    background: #fff;
}
.grid {
    table-layout: fixed;
    width: 552px;
    border-spacing: 0;
    color: #111;
    font-family: Lato, sans-serif;
    font-size: 11px;
}
.c-num {
    width: 32px;
}
.c-info {
    width: 34px;
}
.c-mode {
    width: 50px;
}
.c-name {
    width: 130px;
}
.c-dur {
    width: 71px;
}
.c-fin {
    width: 72px;
}
.c-pred {
    width: 92px;
}
.grid th {
    background: #262626;
    color: #e6e6e6;
    font-family: "Open Sans", "Noto Sans", sans-serif;
    font-size: 10px;
    font-weight: normal;
    padding: 0;
    border-right: 1px solid #555;
}
.grid thead th {
    height: 30px;
    padding: 0 3px 2px;
    text-align: left;
    vertical-align: bottom;
    line-height: 13px;
    background-repeat: no-repeat;
}
.grid thead th:nth-child(n+3) {
    background-image: linear-gradient(#fff, #fff), linear-gradient(#fff, #fff), linear-gradient(#fff, #fff);
    background-size: 5px 1px, 3px 1px, 1px 1px;
    background-position: right 5px top 22px, right 6px top 23px, right 7px top 24px;
}
.grid thead .info {
    text-align: center;
    vertical-align: middle;
    padding-top: 9px;
}
.grid thead .current {
    background-color: #656565;
    color: #fff;
    font-weight: bold;
    border-bottom: 1px solid #3f9a3f;
    padding-bottom: 1px;
}
.grid tbody th {
    vertical-align: top;
    line-height: 16px;
    border-right: 0;
    border-bottom: 1px solid #484848;
}
.grid tbody tr {
    height: 19px;
}
.grid tbody .short {
    height: 18px;
}
.grid tbody .double {
    height: 32px;
}
.grid td {
    height: inherit;
    padding: 1px 1px 0;
    vertical-align: top;
    line-height: 15px;
    border-right: 1px solid #d8d8d8;
    border-bottom: 1px solid #d8d8d8;
}
.grid td:nth-child(n+5) {
    white-space: nowrap;
}
.mode svg {
    display: block;
    width: 14px;
    height: 10px;
    margin: 2px 0 0 1px;
}
.grid .name {
    padding-left: 21px;
}
.grid .summary td {
    font-weight: bold;
}
.grid .summary .name {
    padding-left: 2px;
}
.summary .name::before {
    content: "";
    display: inline-block;
    border-left: 4px solid transparent;
    border-bottom: 4px solid #333;
    margin-right: 4px;
    vertical-align: 1px;
}
.changed {
    background: #edf0fb;
}
.grid .before td, .grid .selected td {
    border-bottom-color: #8a8a8a;
}
.grid .selected th {
    background: #666;
    color: #fff;
    font-weight: bold;
}
.grid .editing-cell {
    position: relative;
    padding: 0;
    outline: 2px solid #33763a;
    outline-offset: -1px;
}
.editing-cell input {
    display: block;
    width: 100%;
    height: 17px;
    padding-left: 2px;
}
.text-cursor {
    position: absolute;
    left: 34px;
    top: 2px;
    width: 1px;
    height: 13px;
    background: #222;
}
.handle {
    position: absolute;
    right: -2px;
    bottom: -2px;
    width: 4px;
    height: 4px;
    background: #1c5a23;
    border: 1px solid #fff;
    border-width: 1px 0 0 1px;
}
.pointer {
    position: absolute;
    left: 487px;
    top: 315px;
}
.gantt {
    flex: 1;
    min-width: 0;
    margin-left: 3px;
    display: flex;
    flex-direction: column;
}
.scale {
    display: flex;
    overflow: hidden;
    color: #e0e0e0;
    white-space: nowrap;
    font-size: 8px;
}
.scale span {
    flex: none;
}
.months {
    padding-top: 1px;
    height: 15px;
}
.months span {
    height: 13px;
    line-height: 13px;
    padding-left: 3px;
    border-left: 1px solid #555;
}
.months .lead {
    width: 55px;
    border: 0;
}
.m112 {
    width: 112px;
}
.m120 {
    width: 120px;
}
.m124 {
    width: 124px;
}
.days {
    height: 15px;
}
.days span {
    width: 20px;
    border-right: 1px solid #555;
    line-height: 12px;
    text-align: center;
}
.chart {
    flex: 1;
    min-height: 0;
    position: relative;
    background: #fff;
    border-right: 1px solid #ccc;
}
.bars {
    display: block;
    position: absolute;
    width: 100%;
    height: 100%;
}
.task {
    fill: #8ab6ea;
}
.link {
    fill: none;
    stroke: #4c86be;
}
.link.pale {
    stroke: #9dc0dc;
}
.bracket {
    fill: none;
    stroke: #333;
    stroke-width: 1.5px;
}
.dots {
    stroke: #999;
    stroke-dasharray: 1 2;
}
.row-line {
    stroke: #8a8a8a;
}
.activate {
    position: absolute;
    right: 50px;
    bottom: 0;
    color: #b4b4b4;
    font-size: 11px;
    line-height: 16px;
}
.activate strong {
    display: block;
    font-size: 16px;
    line-height: 22px;
    font-weight: normal;
}

/* scroll bars */
.hscroll {
    height: 14px;
    display: flex;
    border: 1px solid #e6e6e6;
    border-width: 1px 0 1px 1px;
    background: #333;
}
.hscroll button, .vscroll button {
    width: 13px;
    flex: none;
    background: #484848;
    color: #999;
    font-size: 6px;
    line-height: 12px;
    text-align: center;
}
.hscroll .end {
    width: 14px;
    border-left: 1px solid #fff;
}
.track {
    flex: 1;
    display: flex;
}
.thumb {
    background: #595959;
}
.sheet-track .thumb {
    width: 68%;
}
.gantt-track .thumb {
    width: 49%;
    margin-left: 9%;
}
.vscroll {
    width: 13px;
    flex: none;
    display: flex;
    flex-direction: column;
    border: 1px solid #e6e6e6;
    border-width: 1px 1px 1px 0;
    margin-bottom: 14px;
    background: #333;
}
.vscroll button {
    width: auto;
    height: 13px;
}
.vscroll .track {
    flex-direction: column;
    justify-content: flex-end;
}
.vscroll .thumb {
    height: 77%;
}

/* status bar */
.status {
    height: 19px;
    display: flex;
    align-items: center;
    background: #262626;
    font-size: 8px;
}
.state {
    width: 53px;
    padding-left: 5px;
}
.new-tasks {
    display: flex;
    align-items: center;
    gap: 2px;
}
.views {
    margin-left: auto;
    display: flex;
    height: 100%;
}
.views button {
    width: 28px;
    display: flex;
    align-items: center;
    justify-content: center;
}
.views .active {
    background: #4f4f4f;
}
.zoom {
    display: flex;
    align-items: center;
    gap: 3px;
    margin-left: 2px;
    padding-right: 2px;
    font-size: 12px;
}
.zoom input {
    appearance: none;
    width: 84px;
    height: 9px;
    background: linear-gradient(#ddd, #ddd) center / 100% 1px no-repeat;
}
.zoom input::-webkit-slider-thumb {
    appearance: none;
    width: 4px;
    height: 9px;
    background: #fff;
}

/* windows taskbar */
.taskbar {
    height: 33px;
    display: flex;
    justify-content: space-between;
    background: linear-gradient(90deg, #0d222d, #131d25 40%, #15191c 70%, #0c1821);
}
.apps, .tray {
    display: flex;
}
.apps button {
    width: 41px;
    display: flex;
    align-items: center;
    justify-content: center;
    border-bottom: 2px solid transparent;
}
.apps .open {
    border-image: linear-gradient(90deg, transparent 3px, #76b9ed 3px, #76b9ed 38px, transparent 38px) 2;
}
.apps .open.active {
    background: #414d57;
    border-image: none;
    border-bottom-color: #76b9ed;
}
.app-letter {
    fill: #fff;
    font: bold 8px "Open Sans", sans-serif;
}
.tray {
    font-size: 10px;
}
.tray button {
    width: 28px;
    display: flex;
    align-items: center;
    justify-content: center;
}
.tray button:first-child {
    width: 38px;
}
.tray .lang {
    width: 36px;
}
.tray .clock {
    display: block;
    width: 50px;
    line-height: 15px;
}
.tray .notices {
    width: 45px;
    margin-right: 3px;
    border-right: 1px solid #44525a;
}
```
